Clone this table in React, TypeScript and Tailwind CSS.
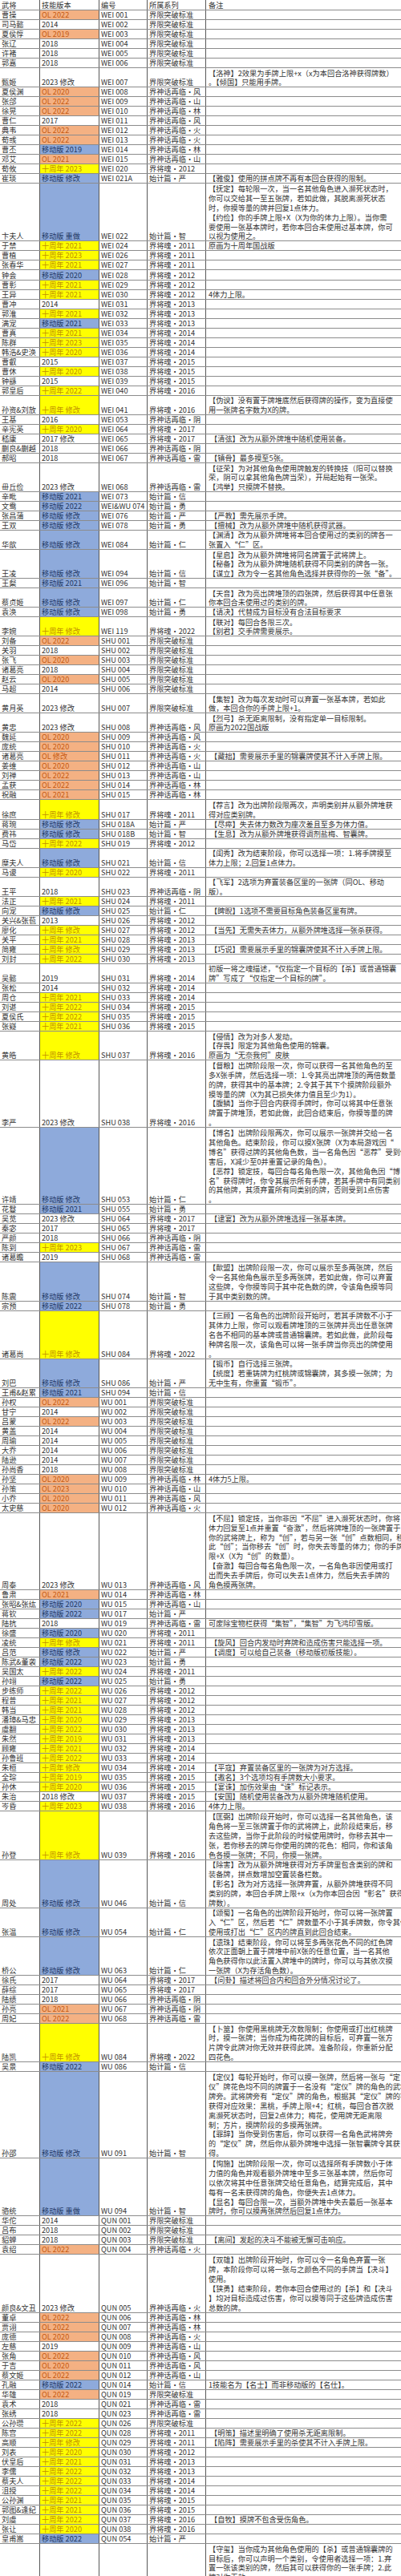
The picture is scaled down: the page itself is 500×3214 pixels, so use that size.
import React from "react";

// one line of text in the sheet is a hair over 12px tall
const LINE = 12.025;

type Row = [string, string, string, string, string[]];

const rows: Row[] = [
  ["曹操", "OL 2022", "WEI 001", "界限突破标准", []],
  ["司马懿", "2014", "WEI 002", "界限突破标准", []],
  ["夏侯惇", "OL 2019", "WEI 003", "界限突破标准", []],
  ["张辽", "2018", "WEI 004", "界限突破标准", []],
  ["许褚", "2018", "WEI 005", "界限突破标准", []],
  ["郭嘉", "2018", "WEI 006", "界限突破标准", []],
  ["甄姬", "2023 修改", "WEI 007", "界限突破标准", ["【洛神】2效果为手牌上限+x（x为本回合洛神获得牌数）", "。【倾国】只能用手牌。"]],
  ["夏侯渊", "OL 2020", "WEI 008", "界神话再临·风", []],
  ["张郃", "OL 2022", "WEI 009", "界神话再临·山", []],
  ["徐晃", "OL 2022", "WEI 010", "界神话再临·林", []],
  ["曹仁", "2017", "WEI 011", "界神话再临·风", []],
  ["典韦", "OL 2022", "WEI 012", "界神话再临·火", []],
  ["荀彧", "OL 2022", "WEI 013", "界神话再临·火", []],
  ["曹丕", "移动版 2019", "WEI 014", "界神话再临·林", []],
  ["邓艾", "OL 2021", "WEI 015", "界神话再临·山", []],
  ["荀攸", "十周年 2023", "WEI 020", "界将魂·2012", []],
  ["崔琰", "移动版 修改", "WEI 021A", "始计篇·严", ["【雅俊】使用的拼点牌不再有本回合获得的限制。"]],
  ["卞夫人", "移动版 重做", "WEI 022", "始计篇·智", [
    "【抚定】每轮限一次，当一名其他角色进入濒死状态时，",
    "你可以交给其一至五张牌，若如此做，其脱离濒死状态",
    "时，你摸等量的牌并回复1点体力。",
    "【约俭】你的手牌上限+X（X为你的体力上限）。当你需",
    "要使用一张基本牌时，若你本回合未使用过基本牌，你可",
    "以视为使用之。",
  ]],
  ["于禁", "十周年 2021", "WEI 024", "界将魂·2011", ["原画为十周年国战版"]],
  ["曹植", "十周年 2023", "WEI 026", "界将魂·2011", []],
  ["张春华", "十周年 2021", "WEI 027", "界将魂·2011", []],
  ["钟会", "移动版 2020", "WEI 028", "界将魂·2012", []],
  ["曹彰", "十周年 2021", "WEI 029", "界将魂·2012", []],
  ["王异", "十周年 2021", "WEI 030", "界将魂·2012", ["4体力上限。"]],
  ["曹冲", "2014", "WEI 031", "界将魂·2013", []],
  ["郭淮", "十周年 2021", "WEI 032", "界将魂·2013", []],
  ["满宠", "移动版 2021", "WEI 033", "界将魂·2013", []],
  ["曹真", "十周年 2021", "WEI 034", "界将魂·2014", []],
  ["陈群", "十周年 2023", "WEI 035", "界将魂·2014", []],
  ["韩浩&史涣", "十周年 2020", "WEI 036", "界将魂·2014", []],
  ["曹叡", "2015", "WEI 037", "界将魂·2015", []],
  ["曹休", "十周年 2020", "WEI 038", "界将魂·2015", []],
  ["钟繇", "2015", "WEI 039", "界将魂·2015", []],
  ["郭皇后", "十周年 2022", "WEI 040", "界将魂·2016", []],
  ["孙资&刘放", "十周年 修改", "WEI 041", "界将魂·2016", ["【伪谀】没有置于牌堆底然后获得牌的操作，变为直接使", "用一张牌名字数为X的牌。"]],
  ["王基", "2016", "WEI 053", "界神话再临·阴", []],
  ["辛宪英", "十周年 2020", "WEI 064", "界将魂·2017", []],
  ["嵇康", "2017 修改", "WEI 065", "界将魂·2017", [" 【清弦】改为从额外牌堆中随机使用装备。"]],
  ["蒯良&蒯越", "2018", "WEI 066", "界神话再临·阴", []],
  ["郝昭", "2018", "WEI 067", "界神话再临·雷", [" 【镇骨】最多摸至5张。"]],
  ["毌丘俭", "2023 修改", "WEI 068", "界神话再临·雷", [
    "【征荣】为对其他角色使用牌触发的转换技（阳可以替换",
    "荣，阴可以拿其他角色牌当荣），开局起始有一张荣。",
    "【鸿举】只摸牌不替换。",
  ]],
  ["辛毗", "移动版 2021", "WEI 073", "始计篇·信", []],
  ["文鸯", "移动版 2022", "WEI&WU 074", "始计篇·勇", []],
  ["张昌蒲", "移动版 修改", "WEI 076", "始计篇·严", [" 【严教】需先展示手牌。"]],
  ["王双", "移动版 修改", "WEI 078", "始计篇·勇", [" 【擅械】改为从额外牌堆中随机获得武器。"]],
  ["华歆", "移动版 修改", "WEI 084", "始计篇·仁", ["【渊清】改为从额外牌堆将本回合使用过的类别的牌各一", "张置入“仁”区。"]],
  ["王凌", "移动版 修改", "WEI 094", "始计篇·信", [
    "【星启】改为从额外牌堆将同名牌置于武将牌上。",
    "【秘备】改为从额外牌堆随机获得不同类别的牌各一张。",
    "【谋立】改为令一名其他角色选择并获得你的一张“备”。",
  ]],
  ["王粲", "移动版 2021", "WEI 096", "始计篇·智", []],
  ["蔡贞姬", "移动版 修改", "WEI 097", "始计篇·仁", ["【天音】改为亮出牌堆顶的四张牌，然后获得其中任意张", "你本回合未使用过的类别的牌。"]],
  ["袁涣", "移动版 修改", "WEI 098", "始计篇·勇", ["【请决】代替成为目标没有合法目标要求"]],
  ["李婉", "十周年 修改", "WEI 119", "界将魂·2022", ["【联对】每回合各限三次。", "【别君】交手牌需要展示。"]],
  ["刘备", "OL 2022", "SHU 001", "界限突破标准", []],
  ["关羽", "2018", "SHU 002", "界限突破标准", []],
  ["张飞", "OL 2020", "SHU 003", "界限突破标准", []],
  ["诸葛亮", "2018", "SHU 004", "界限突破标准", []],
  ["赵云", "OL 2020", "SHU 005", "界限突破标准", []],
  ["马超", "2014", "SHU 006", "界限突破标准", []],
  ["黄月英", "2023 修改", "SHU 007", "界限突破标准", ["【集智】改为每次发动时可以弃置一张基本牌，若如此", "做，本回合你的手牌上限+1。"]],
  ["黄忠", "2023 修改", "SHU 008", "界神话再临·风", ["【烈弓】杀无距离限制，没有指定单一目标限制。", "原画为2022国战版"]],
  ["魏延", "OL 2020", "SHU 009", "界神话再临·风", []],
  ["庞统", "OL 2020", "SHU 010", "界神话再临·火", []],
  ["诸葛亮", "OL 修改", "SHU 011", "界神话再临·火", [" 【藏拙】需要展示手里的锦囊牌使其不计入手牌上限。"]],
  ["姜维", "OL 2020", "SHU 012", "界神话再临·山", []],
  ["刘禅", "OL 2022", "SHU 013", "界神话再临·山", []],
  ["孟获", "OL 2022", "SHU 014", "界神话再临·林", []],
  ["祝融", "OL 2021", "SHU 015", "界神话再临·林", []],
  ["徐庶", "十周年 修改", "SHU 017", "界将魂·2011", ["【荐言】改为出牌阶段限两次，声明类别并从额外牌堆获", "得对应类别牌。"]],
  ["蒋琬", "移动版 修改", "SHU 018A", "始计篇·严", [" 【尽瘁】失去体力数改为座次差且至多为体力值。"]],
  ["费祎", "移动版 修改", "SHU 018B", "始计篇·智", [" 【生息】改为从额外牌堆获得调剂盐梅、智囊牌。"]],
  ["马岱", "十周年 2022", "SHU 019", "界将魂·2012", []],
  ["糜夫人", "移动版 修改", "SHU 021", "始计篇·信", ["【闺秀】改为结束阶段，你可以选择一项：1.将手牌摸至", "体力上限；2.回复1点体力。"]],
  ["马谡", "十周年 2020", "SHU 022", "界将魂·2011", []],
  ["王平", "2018", "SHU 023", "界神话再临·阴", ["【飞军】2选项为弃置装备区里的一张牌（同OL、移动", "版）。"]],
  ["法正", "十周年 2021", "SHU 024", "界将魂·2011", []],
  ["向宠", "移动版 修改", "SHU 025", "始计篇·仁", [" 【睥睨】1选项不需要目标角色装备区里有牌。"]],
  ["关兴&张苞", "2013", "SHU 026", "界将魂·2012", []],
  ["廖化", "十周年 修改", "SHU 027", "界将魂·2012", [" 【当先】无需失去体力，从额外牌堆选择一张杀获得。"]],
  ["关平", "十周年 2021", "SHU 028", "界将魂·2013", []],
  ["简雍", "十周年 修改", "SHU 029", "界将魂·2013", [" 【巧说】需要展示手里的锦囊牌使其不计入手牌上限。"]],
  ["刘封", "十周年 2022", "SHU 030", "界将魂·2013", []],
  ["吴懿", "2019", "SHU 031", "界将魂·2014", ["初版一将之魂描述，“仅指定一个目标的【杀】或普通锦囊", "牌”写成了“仅指定一个目标的牌”。"]],
  ["张松", "2014", "SHU 032", "界将魂·2014", []],
  ["周仓", "十周年 2021", "SHU 033", "界将魂·2014", []],
  ["刘谌", "十周年 2022", "SHU 034", "界将魂·2015", []],
  ["夏侯氏", "十周年 2022", "SHU 035", "界将魂·2015", []],
  ["张嶷", "十周年 2021", "SHU 036", "界将魂·2015", []],
  ["黄皓", "十周年 修改", "SHU 037", "界将魂·2016", ["【侵情】改为对多人发动。", "【存畏】限定为其他角色使用的锦囊。", "原画为“无奈我何”皮肤"]],
  ["李严", "2023 修改", "SHU 038", "界将魂·2016", [
    "【督粮】出牌阶段限一次，你可以获得一名其他角色的至",
    "多X张手牌，然后选择一项：1.令其亮出牌堆顶的两倍数量",
    "的牌，获得其中的基本牌；2.令其于其下个摸牌阶段额外",
    "摸等量的牌（X为其已损失体力值且至少为1）。",
    "【腹鳞】当你于回合内获得手牌时，你可以将其中任意张",
    "牌置于牌堆顶，若如此做，此回合结束后，你摸等量的牌",
    "。",
  ]],
  ["许靖", "移动版 修改", "SHU 053", "始计篇·仁", [
    "【博名】出牌阶段限两次，你可以展示一张牌并交给一名",
    "其他角色。结束阶段，你可以摸X张牌（X为本局游戏因“",
    "博名”获得过牌的其他角色数，当一名角色因“恶荐”受到伤",
    "害后，X减少至0并重置记录的角色）。",
    "【恶荐】锁定技，每回合每名角色限一次，其他角色因“博",
    "名”获得牌时，你令其展示所有手牌，若其手牌中有同类别",
    "的其他牌，其须弃置所有同类别的牌，否则受到1点伤害",
    "。",
  ]],
  ["花鬘", "移动版 2021", "SHU 055", "始计篇·勇", []],
  ["吴苋", "2023 修改", "SHU 064", "界将魂·2017", [" 【逮宴】改为从额外牌堆选择一张基本牌。"]],
  ["秦宓", "2017", "SHU 065", "界将魂·2017", []],
  ["严颜", "2018", "SHU 066", "界神话再临·阴", []],
  ["陈到", "十周年 2023", "SHU 067", "界神话再临·雷", []],
  ["诸葛瞻", "2019", "SHU 068", "界神话再临·雷", []],
  ["陈震", "移动版 修改", "SHU 074", "始计篇·智", [
    "【歃盟】出牌阶段限一次，你可以展示至多两张牌，然后",
    "令一名其他角色展示至多两张牌，若如此做，你可以弃置",
    "这些牌，令你摸等同于其中花色数的牌，令该角色摸等同",
    "于其中类别数的牌。",
  ]],
  ["宗预", "移动版 2022", "SHU 078", "始计篇·勇", []],
  ["诸葛尚", "十周年 修改", "SHU 084", "界将魂·2022", [
    "【三顾】一名角色的出牌阶段开始时，若其手牌数不小于",
    "其体力上限，你可以观看牌堆顶的三张牌并亮出任意张牌",
    "名各不相同的基本牌或普通锦囊牌。若如此做，此阶段每",
    "种牌名限一次，该角色可以将一张手牌当你亮出的牌使用",
    "。",
  ]],
  ["刘巴", "移动版 修改", "SHU 086", "始计篇·严", ["【锻币】自行选择三张牌。", "【统度】若重铸牌为红桃牌或锦囊牌，其多摸一张牌；为", "无中生有，你重置“锻币”。"]],
  ["王甫&赵累", "移动版 2021", "SHU 094", "始计篇·信", []],
  ["孙权", "OL 2022", "WU 001", "界限突破标准", []],
  ["甘宁", "2014", "WU 002", "界限突破标准", []],
  ["吕蒙", "OL 2022", "WU 003", "界限突破标准", []],
  ["黄盖", "2014", "WU 004", "界限突破标准", []],
  ["周瑜", "2014", "WU 005", "界限突破标准", []],
  ["大乔", "2014", "WU 006", "界限突破标准", []],
  ["陆逊", "2014", "WU 007", "界限突破标准", []],
  ["孙尚香", "2018", "WU 008", "界限突破标准", []],
  ["孙坚", "OL 2020", "WU 009", "界神话再临·林", ["4体力5上限。"]],
  ["孙策", "OL 2023", "WU 010", "界神话再临·山", []],
  ["小乔", "OL 2020", "WU 011", "界神话再临·风", []],
  ["太史慈", "OL 2020", "WU 012", "界神话再临·火", []],
  ["周泰", "2023 修改", "WU 013", "界神话再临·风", [
    "【不屈】锁定技，当你非因“不屈”进入濒死状态时，你将",
    "体力回复至1点并重置“奋激”，然后将牌堆顶的一张牌置于",
    "你的武将牌上，称为“创”，若与另一张“创”点数相同，移去",
    "此“创”；当你移去“创”时，你失去等量的体力；你的手牌上",
    "限+X（X为“创”的数量）。",
    "【奋激】每回合每名角色限一次，一名角色非因使用或打",
    "出而失去手牌后，你可以失去1点体力，然后失去手牌的",
    "角色摸两张牌。",
  ]],
  ["鲁肃", "OL 2021", "WU 014", "界神话再临·林", []],
  ["张昭&张纮", "移动版 2020", "WU 015", "界神话再临·山", []],
  ["蒋钦", "移动版 2022", "WU 017", "始计篇·严", []],
  ["陆抗", "2018", "WU 019", "界神话再临·雷", ["可废除宝物栏获得“集智”，“集智”为飞鸿印雪版。"]],
  ["徐盛", "移动版 2020", "WU 020", "界将魂·2011", []],
  ["凌统", "十周年 修改", "WU 021", "界将魂·2011", [" 【旋风】回合内发动时弃牌和造成伤害只能选择一项。"]],
  ["吕范", "移动版 修改", "WU 022", "始计篇·严", [" 【调度】可以给自己装备（移动版初版技能）。"]],
  ["陈武&董袭", "移动版 2022", "WU 023", "始计篇·勇", []],
  ["吴国太", "十周年 2022", "WU 024", "界将魂·2011", []],
  ["孙翊", "移动版 2022", "WU 025", "始计篇·勇", []],
  ["步练师", "十周年 2022", "WU 026", "界将魂·2012", []],
  ["程普", "十周年 2021", "WU 027", "界将魂·2012", []],
  ["韩当", "十周年 2021", "WU 028", "界将魂·2012", []],
  ["潘璋&马忠", "十周年 2020", "WU 029", "界将魂·2013", []],
  ["虞翻", "十周年 2022", "WU 030", "界将魂·2013", []],
  ["朱然", "十周年 2019", "WU 031", "界将魂·2013", []],
  ["顾雍", "十周年 2021", "WU 032", "界将魂·2014", []],
  ["孙鲁班", "十周年 2022", "WU 033", "界将魂·2014", []],
  ["朱桓", "十周年 修改", "WU 034", "界将魂·2014", [" 【平寇】弃置装备区里的一张牌为对方选择。"]],
  ["全琮", "十周年 2019", "WU 035", "界将魂·2015", [" 【邀名】3个选项均有手牌数大小要求。"]],
  ["孙休", "十周年 2020", "WU 036", "界将魂·2015", [" 【宴诛】加伤效果由“诛”标记表示。"]],
  ["朱治", "2018 修改", "WU 037", "界将魂·2015", [" 【安国】随机使用装备改为从额外牌堆随机使用。"]],
  ["岑昏", "十周年 2023", "WU 038", "界将魂·2016", ["4体力上限。"]],
  ["孙登", "十周年 修改", "WU 039", "界将魂·2016", [
    "【匡弼】出牌阶段开始时，你可以选择一名其他角色，该",
    "角色将一至三张牌置于你的武将牌上，此阶段结束后，移",
    "去这些牌，当你于此阶段的时候使用牌时，你移去其中一",
    "张，若你移去的牌与你使用的牌的花色：相同，你和该角",
    "色各摸一张牌；不同，你摸一张牌。",
  ]],
  ["周处", "移动版 修改", "WU 046", "始计篇·信", [
    "【除害】改为从额外牌堆获得对方手牌里包含类别的牌和",
    "装备牌，拼点数增加空置装备栏数。",
    "【彰名】改为对方选择一张牌弃置，从额外牌堆获得不同",
    "类别的牌，本回合手牌上限+x（x为你本回合因“彰名”获得",
    "牌数）。",
  ]],
  ["张温", "移动版 修改", "WU 054", "始计篇·仁", [
    "【颂蜀】一名角色的出牌阶段开始时，你可以将一张牌置",
    "入“仁”区，然后若“仁”牌数量不小于其手牌数，你令其仅能",
    "使用或打出“仁”区内的牌直到此回合结束。",
  ]],
  ["桥公", "移动版 修改", "WU 063", "始计篇·仁", [
    "【遗珠】结束阶段，你可以将至多两张花色不同的红色牌",
    "依次正面朝上置于牌堆中前X张的任意位置，当一名其他",
    "角色获得你以此法置入牌堆中的牌时，你可以与其依次摸",
    "一张牌（X为存活角色数）。",
  ]],
  ["徐氏", "2017", "WU 064", "界将魂·2017", [" 【问卦】描述将回合内和回合外分情况讨论了。"]],
  ["薛综", "2017", "WU 065", "界将魂·2017", []],
  ["陆绩", "2018", "WU 066", "界神话再临·阴", []],
  ["孙亮", "OL 2021", "WU 067", "界神话再临·阴", []],
  ["周妃", "OL 2022", "WU 068", "界神话再临·雷", []],
  ["陆凯", "十周年 修改", "WU 084", "界将魂·2022", [
    "【卜筮】你使用黑桃牌无次数限制；你使用或打出红桃牌",
    "时，摸一张牌；当你成为梅花牌的目标后，可弃置一张方",
    "片牌令此牌对你无效并获得此牌。准备阶段，你重新分配",
    "四花色。",
  ]],
  ["吴景", "移动版 2022", "WU 086", "始计篇·信", []],
  ["孙邵", "移动版 修改", "WU 091", "始计篇·智", [
    "【定仪】每轮开始时，你可以摸一张牌，然后将一张与“定",
    "仪”牌花色均不同的牌置于一名没有“定仪”牌的角色的武将",
    "牌旁。武将牌旁有“定仪”牌的角色，根据其“定仪”牌的花色",
    "获得对应效果：黑桃，手牌上限+4；红桃，每回合首次脱",
    "离濒死状态时，回复2点体力；梅花，使用牌无距离限",
    "制；方片，摸牌阶段的多摸两张牌。",
    "【罪辞】当你受到伤害后，你可以获得一名角色武将牌旁",
    "的“定仪”牌，然后你从额外牌堆中选择一张智囊牌令其获",
    "得。",
  ]],
  ["骆统", "移动版 重做", "WU 094", "始计篇·智", [
    "【恂施】出牌阶段限一次，你可以选择所有手牌数小于体",
    "力值的角色并观看额外牌堆中至多三张基本牌，然后你可",
    "以依次将其中任意张牌交给任意角色，结算完成后，其中",
    "每有一名未获得牌的角色，你便失去1点体力。",
    "【显名】每回合限一次，当额外牌堆中失去最后一张基本",
    "牌时，你可以摸两张牌然后回复1点体力。",
  ]],
  ["华佗", "2014", "QUN 001", "界限突破标准", []],
  ["吕布", "2018", "QUN 002", "界限突破标准", []],
  ["貂蝉", "2018", "QUN 003", "界限突破标准", [" 【离间】发起的决斗不能被无懈可击响应。"]],
  ["袁绍", "OL 2022", "QUN 004", "界神话再临·火", []],
  ["颜良&文丑", "2023 修改", "QUN 005", "界神话再临·火", [
    "【双雄】出牌阶段开始时，你可以令一名角色弃置一张",
    "牌，本阶段你可以将一张与之颜色不同的手牌当【决斗】",
    "使用。",
    "【狭勇】结束阶段，若你本回合使用过的【杀】和【决斗",
    "】均对目标造成过伤害，你可以摸等同于这些牌造成伤害",
    "总数的牌。",
  ]],
  ["董卓", "OL 2022", "QUN 006", "界神话再临·林", []],
  ["贾诩", "OL 2022", "QUN 007", "界神话再临·林", []],
  ["庞德", "OL 2020", "QUN 008", "界神话再临·火", []],
  ["左慈", "2019", "QUN 009", "界神话再临·山", []],
  ["张角", "OL 2022", "QUN 010", "界神话再临·风", []],
  ["于吉", "OL 2020", "QUN 011", "界神话再临·风", []],
  ["蔡文姬", "OL 2022", "QUN 012", "界神话再临·山", []],
  ["孔融", "移动版 2022", "QUN 014", "始计篇·信", ["1技能名为【名士】而非移动版的【名仕】。"]],
  ["华雄", "OL 2022", "QUN 019", "界限突破标准", []],
  ["袁术", "2018", "QUN 021", "界神话再临·雷", []],
  ["张绣", "2018", "QUN 023", "界神话再临·雷", []],
  ["公孙瓒", "十周年 2022", "QUN 026", "界限突破标准", []],
  ["陈宫", "十周年 2022", "QUN 028", "界将魂·2011", [" 【明策】描述里明确了使用杀无距离限制。"]],
  ["高顺", "十周年 修改", "QUN 029", "界将魂·2011", [" 【陷阵】需要展示手里的杀使其不计入手牌上限。"]],
  ["刘表", "十周年 2020", "QUN 030", "界将魂·2012", []],
  ["伏皇后", "十周年 2021", "QUN 031", "界将魂·2013", []],
  ["李儒", "十周年 2022", "QUN 032", "界将魂·2013", []],
  ["蔡夫人", "十周年 2022", "QUN 033", "界将魂·2014", []],
  ["沮授", "十周年 2022", "QUN 034", "界将魂·2014", []],
  ["公孙渊", "十周年 2021", "QUN 035", "界将魂·2015", []],
  ["郭图&逢纪", "十周年 2021", "QUN 036", "界将魂·2015", []],
  ["刘虞", "十周年 2022", "QUN 037", "界将魂·2016", [" 【自牧】摸牌不包含受伤角色。"]],
  ["张让", "十周年 2020", "QUN 038", "界将魂·2016", []],
  ["皇甫嵩", "移动版 2022", "QUN 054", "始计篇·严", []],
  ["刘协", "2023 修改", "QUN 055", "界将魂·2017", [
    "【守玺】当你成为其他角色使用的【杀】或普通锦囊牌的",
    "目标后，你可以声明一个类别，令使用者选择一项：1.弃",
    "置一张该类别的牌，然后其可以获得你的一张手牌；2.此",
    "牌对你无效。",
    "",
  ]],
];

function verClass(v: string) {
  if (v.startsWith("OL")) return "bg-[#f4b183] text-[#c55a11]";
  if (v.startsWith("移动版")) return "bg-[#8eaadb] text-[#1f3864]";
  if (v.startsWith("十周年")) return "bg-[#ffff00] text-[#bf8f00]";
  return "";
}

const cell = "flex items-end px-[2px] border-r border-[#595959] whitespace-nowrap leading-[11px]";

function SheetRow({ r }: { r: Row }) {
  const [name, ver, code, series, notes] = r;
  const lines = Math.max(1, notes.length);
  return (
    <div
      className="grid grid-cols-[50px_74px_60px_73px_243px] border-b border-[#8c8c8c]"
      style={{ height: lines * LINE }}
    >
      <div className={cell}>{name}</div>
      <div className={`${cell} ${verClass(ver)}`}>{ver}</div>
      <div className={cell}>{code}</div>
      <div className={cell}>{series}</div>
      <div className="flex flex-col justify-end pl-[3px] min-w-0">
        {notes.map((l, i) => (
          <div key={i} className="flex-1 flex items-end whitespace-pre leading-[11px]">
            {l}
          </div>
        ))}
      </div>
    </div>
  );
}

export default function App() {
  return (
    <div
      className="w-[500px] h-[3214px] overflow-hidden bg-white text-[#333] text-[9.2px]"
      style={{ fontFamily: '"Noto Sans CJK SC", sans-serif' }}
    >
      <div className="grid grid-cols-[50px_74px_60px_73px_243px] h-[13px] border-b border-[#8c8c8c]">
        <div className={cell}>武将</div>
        <div className={cell}>技能版本</div>
        <div className={cell}>编号</div>
        <div className={cell}>所属系列</div>
        <div className="flex items-end pl-[3px] leading-[11px]">备注</div>
      </div>
      {rows.map((r, i) => (
        <SheetRow key={i} r={r} />
      ))}
    </div>
  );
}
